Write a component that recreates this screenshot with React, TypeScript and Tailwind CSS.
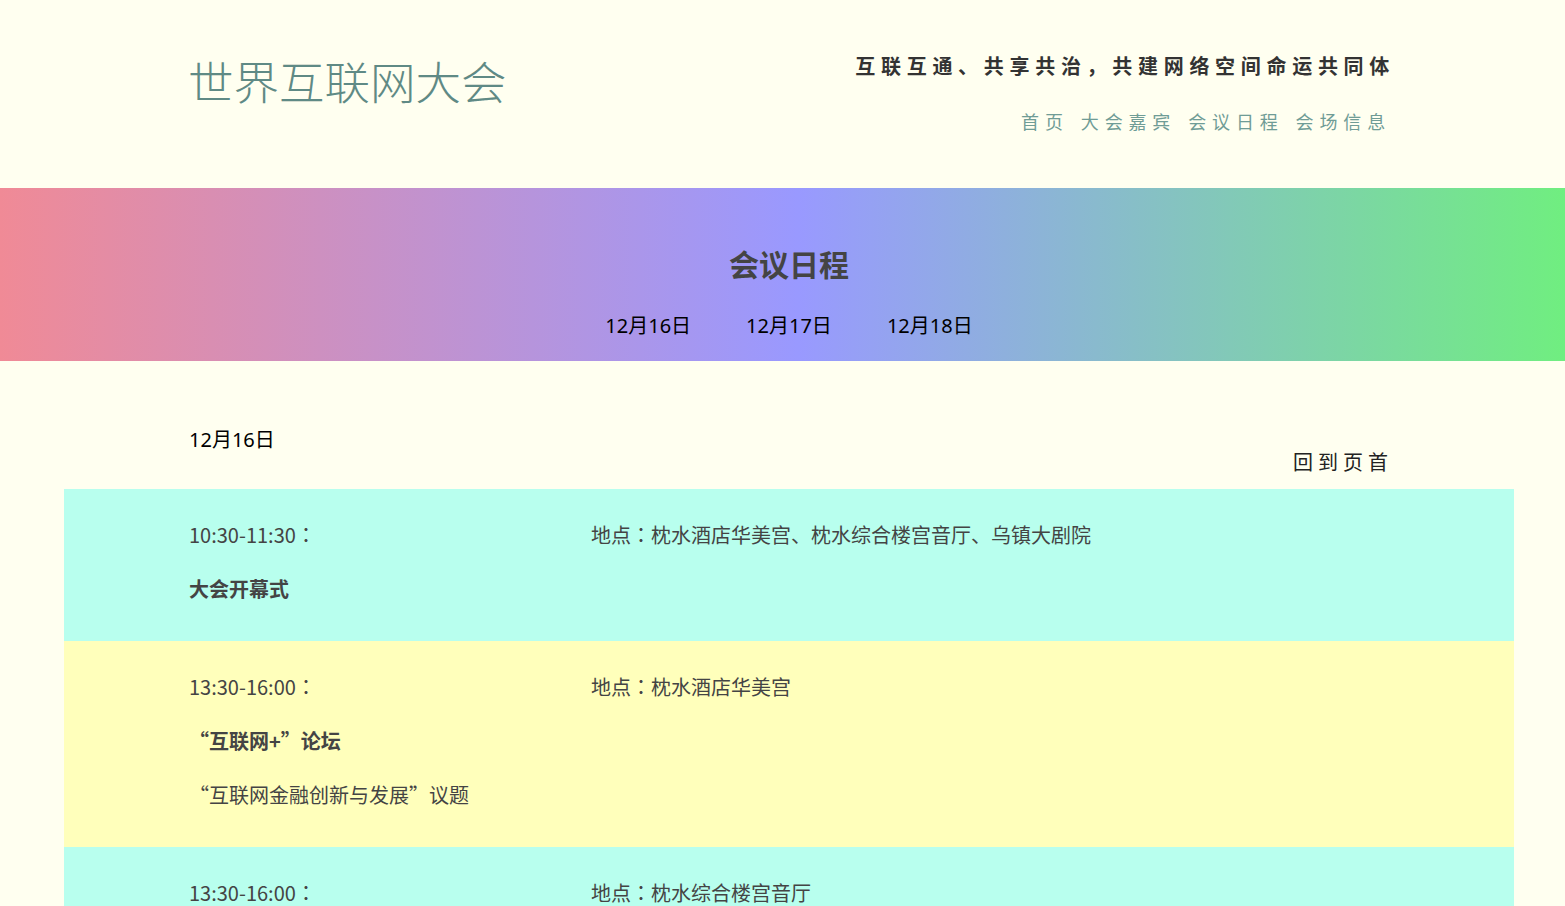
import React from 'react'

const cjk = { fontFamily: '"Noto Sans", "Noto Sans CJK SC", sans-serif' }
const cjkFirst = { fontFamily: '"Noto Sans CJK SC", "Noto Sans", sans-serif' }
const jp = { fontFamily: '"Noto Sans CJK JP", "Noto Sans CJK SC", sans-serif' }

type Session = {
    time: string
    place: string
    title: string
    topics?: string[]
    tone: 'cyan' | 'yellow'
}

const sessions: Session[] = [
    { time: '10:30-11:30', place: '枕水酒店华美宫、枕水综合楼宫音厅、乌镇大剧院', title: '大会开幕式', tone: 'cyan' },
    {
        time: '13:30-16:00',
        place: '枕水酒店华美宫',
        title: '“互联网+”论坛',
        topics: ['“互联网金融创新与发展”议题'],
        tone: 'yellow',
    },
    { time: '13:30-16:00', place: '枕水综合楼宫音厅', title: '“互联网+”论坛', tone: 'cyan' },
]

// centred full-width colon, as the original font draws it
const Colon = () => <span style={jp}>：</span>

function SessionRow({ s }: { s: Session }) {
    return (
        <div
            className={`ml-[64px] w-[1450px] pl-[125px] pt-[31px] pb-[37px] text-[20px] leading-[30px] text-[#444] ${
                s.tone === 'cyan' ? 'bg-[#b8ffee]' : 'bg-[#ffffbb]'
            }`}
            style={cjkFirst}
        >
            <div className="flex h-[30px]">
                <p className="w-[402px]">{s.time}<Colon /></p>
                <p>地点<Colon />{s.place}</p>
            </div>
            <p className="mt-[24px] h-[30px] font-bold">{s.title}</p>
            {s.topics?.map(t => (
                <p key={t} className="mt-[24px] h-[30px]">{t}</p>
            ))}
        </div>
    )
}

export default function App() {
    return (
        <div className="min-h-screen w-full overflow-hidden bg-[#fffff0]" style={cjk}>
            {/* Header */}
            <header className="h-[188px] ml-[189px] w-[1200px] flex justify-between">
                <h1 className="mt-[52px] ml-[-1px] text-[45.5px] leading-[60px] font-light text-[#5f8a85]">
                    世界互联网大会
                </h1>
                <div className="flex flex-col items-end">
                    <p className="mt-[52px] text-[20px] leading-[30px] font-bold text-[#333] tracking-[5.7px] mr-[-6px]">
                        互联互通、共享共治，共建网络空间命运共同体
                    </p>
                    <nav className="mt-[28px] flex gap-[12px] text-[18px] leading-[24px] text-[#6f9c96] tracking-[5.85px] mr-[-2px]">
                        <a>首页</a>
                        <a>大会嘉宾</a>
                        <a>会议日程</a>
                        <a>会场信息</a>
                    </nav>
                </div>
            </header>

            {/* Banner */}
            <section className="h-[173px] bg-[linear-gradient(to_right,#f08a96,#9999ff_51%,#70ee80)] flex flex-col items-center pl-[13px]">
                <h2 className="mt-[59px] text-[30px] leading-[36px] font-bold text-[#444]">会议日程</h2>
                <div className="mt-[29px] flex gap-[55px] text-[20px] leading-[28px] text-black">
                    <a>12月16日</a>
                    <a>12月17日</a>
                    <a>12月18日</a>
                </div>
            </section>

            {/* Day */}
            <div className="ml-[189px] w-[1200px] h-[128px] pt-[64px] flex justify-between items-start">
                <h3 className="h-[30px] text-[20px] leading-[30px] text-black">12月16日</h3>
                <a className="mt-[23px] h-[30px] text-[20px] leading-[30px] text-[#222] tracking-[5px] mr-[-4px]">回到页首</a>
            </div>

            {sessions.map((s, i) => (
                <SessionRow key={i} s={s} />
            ))}
        </div>
    )
}
